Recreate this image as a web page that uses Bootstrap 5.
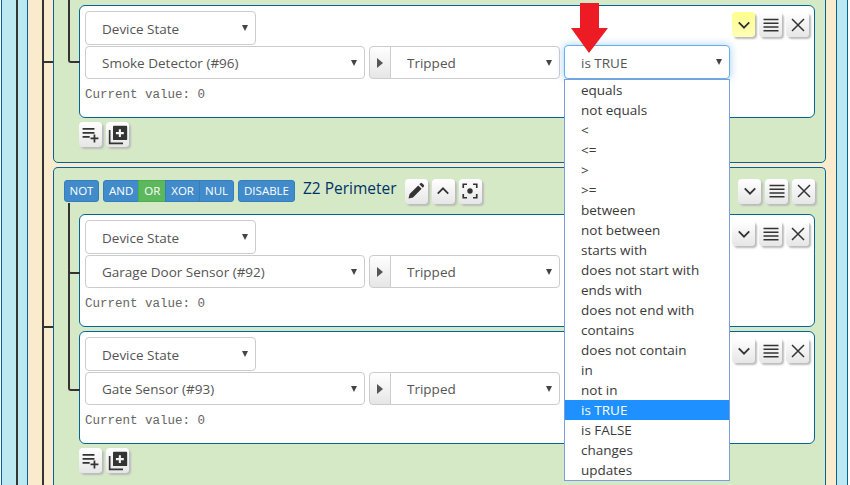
<!DOCTYPE html>
<html lang="en">
<head>
    <meta charset="UTF-8">
    <meta name="viewport" content="width=device-width, initial-scale=1.0">
    <title>Reactor conditions</title>
    <link href="https://cdn.jsdelivr.net/npm/bootstrap@5.3.0/dist/css/bootstrap.min.css" rel="stylesheet">
    <style>
        html, body { height: 485px; overflow: hidden; }
        body { background: #fff; font-family: "Open Sans", sans-serif; font-size: 13.5px; color: #333; }

        .lvl-blue { position: relative; margin: -20px 2px 0 1px; height: 505px; padding: 0 10px 0 25px; background: #bce8f1; border: 1px solid #036597; border-bottom: 0; }
        .lvl-tan { position: relative; height: 100%; padding: 0 10px 0 25px; background: #faebcc; border: 1px solid #036597; border-bottom: 0; }
        .tree-v { position: absolute; top: 0; bottom: 0; left: 14px; width: 2px; background: #333; }

        .grp { position: relative; background: #d6e9c6; border: 1px solid #036597; border-radius: 5px; padding: 0 10px 0 25px; }
        .grp-one { padding-top: 22px; padding-bottom: 15px; margin-bottom: 4px; }
        .grp-two { padding-top: 12px; height: 318px; border-bottom: 0; border-radius: 5px 5px 0 0; }
        .grp::before { content: ""; position: absolute; left: -11px; width: 10px; height: 2px; background: #333; }
        .grp-one::before { bottom: 99px; }
        .grp-two::before { top: 158px; }
        .grp-line { position: absolute; left: 14px; top: 35px; width: 2px; height: 175px; background: #333; }

        .grp-head { height: 22px; margin-left: -15px; margin-bottom: 12px; gap: 4px; }
        .grp-title { font-size: 15.5px; color: #036; margin: -5px 4px 0 4px; white-space: nowrap; }
        .op-btn { padding: 0 5px; height: 22px; font-size: 11.5px; line-height: 20px; border-radius: 3px; background: #428bca; border-color: #357ebd; color: #fff; }
        .op-btn.op-on { background: #5cb85c; border-color: #4cae4c; }
        .op-btn.op-not { padding: 0 4.5px; }

        .cond-card { position: relative; height: 113px; padding: 5px; background: #fff; border: 1px solid #036597; border-radius: 6px; margin-bottom: 4px; }
        .cond-card::before { content: ""; position: absolute; left: -12px; top: -12px; width: 12px; height: 71px; border-left: 2px solid #333; border-bottom: 2px solid #333; border-bottom-left-radius: 3px; }
        .cond-first::before { height: 69px; }
        .cond-top { height: 35px; }
        .cond-row { gap: 4px; }
        .cur-val { font-family: "Liberation Mono", monospace; font-size: 12.5px; line-height: 20px; color: #666; margin-top: 6px; }

        .pick { height: 34px; padding: 0 22px 0 16px; font-size: 13.5px; line-height: 32px; color: #555; border: 1px solid #ccc; border-radius: 4px; font-family: "Open Sans", sans-serif;
            background-image: url("data:image/svg+xml,%3Csvg xmlns='http://www.w3.org/2000/svg' width='8' height='6'%3E%3Cpath d='M1 0h6L4 6z' fill='%23444'/%3E%3C/svg%3E");
            background-position: right 6px center; background-size: 8px 6px; }
        .pick-type { width: 171px; padding-top: 1px; }
        .pick-dev { width: 280px; }
        .pick-test { width: 166px; }
        .cond-row .pick { height: 33px; }
        .pick-wrap { position: relative; }
        .cond-row .pick-open, .cond-row .pick-open:focus { height: 34px; margin-top: -1px; padding-top: 1px; border-color: #66afe9; box-shadow: 0 0 8px rgba(102, 175, 233, .6); }

        .mini-group { width: 191px; flex-wrap: nowrap; }
        .mini-step { width: 22px; padding: 0; justify-content: center; background: linear-gradient(#fff, #e6e6e6); border: 1px solid #ccc; border-radius: 4px 0 0 4px; }
        .mini-group .pick { flex: 1; width: auto; }

        .ico-btn { width: 23px; height: 25px; padding: 0; display: flex; align-items: center; justify-content: center; flex: none; border: 0; border-radius: 4px; background: linear-gradient(#fff, #e6e6e6); box-shadow: 2px 2px 2px #bbb; }
        .ico-btn svg { display: block; }
        .ico-hot { background: linear-gradient(#ffff8c, #ffffb8); }
        .ico-set { gap: 4px; }
        .ico-side { margin-top: 1px; }
        .grp-head .ico-side { margin-top: 0; }

        .test-list { position: absolute; top: 33px; left: 0; width: 166px; min-width: 0; margin: 0; padding: 0; border: 1px solid #7c9fdc; border-radius: 0; z-index: 20; }
        .test-list .dropdown-item { padding: 0 16px; line-height: 20px; font-size: 13.5px; color: #3a3a3a; }
        .test-list .dropdown-item.active { background: #1e90ff; color: #fff; }
        .red-arrow { position: absolute; left: 7px; top: -43px; z-index: 30; pointer-events: none; }
    </style>
</head>
<body>
    <svg width="0" height="0" class="position-absolute">
        <symbol id="i-down" viewBox="0 0 24 24"><path d="M5 8.500l7 7 7-7" fill="none" stroke="#333" stroke-width="2.400"/></symbol>
        <symbol id="i-up" viewBox="0 0 24 24"><path d="M5 15.500l7-7 7 7" fill="none" stroke="#333" stroke-width="2.400"/></symbol>
        <symbol id="i-menu" viewBox="0 0 24 24"><path d="M2 4.500h20M2 9.500h20M2 14.500h20M2 19.500h20" fill="none" stroke="#333" stroke-width="2"/></symbol>
        <symbol id="i-x" viewBox="0 0 24 24"><path d="M3 3l18 18M21 3L3 21" fill="none" stroke="#333" stroke-width="2.2"/></symbol>
        <symbol id="i-pen" viewBox="0 0 24 24"><path d="M2 22l1.500-6L15 4.500l4.500 4.500L8 20.500zM16.500 3l1.500-1.500a1.500 1.500 0 0 1 2 0l2.500 2.500a1.500 1.500 0 0 1 0 2L21 7.500z" fill="#333"/></symbol>
        <symbol id="i-focus" viewBox="0 0 24 24"><path d="M3 8V3h5M16 3h5v5M21 16v5h-5M8 21H3v-5" fill="none" stroke="#333" stroke-width="2.2"/><circle cx="12" cy="12" r="3.600" fill="#333"/></symbol>
        <symbol id="i-addrow" viewBox="0 0 24 24"><path d="M2 5h15M2 10h15M2 15h9M17 12v10M12 17h10" fill="none" stroke="#333" stroke-width="2.200"/></symbol>
        <symbol id="i-addgrp" viewBox="0 0 24 24"><path d="M2 6v16h16" fill="none" stroke="#333" stroke-width="2"/><path fill-rule="evenodd" d="M7 1h15a1 1 0 0 1 1 1v15a1 1 0 0 1-1 1H7a1 1 0 0 1-1-1V2a1 1 0 0 1 1-1zM13 5v3.500H9.500v2.500H13v3.500h2.500V11H19V8.500h-3.500V5z" fill="#333"/></symbol>
    </svg>

    <div class="lvl-blue">
        <div class="tree-v"></div>
        <div class="lvl-tan">
            <div class="tree-v"></div>

            <div class="grp grp-one">
                <div class="cond-card cond-first">
                    <div class="cond-top d-flex justify-content-between align-items-start">
                        <select class="form-select pick pick-type"><option>Device State</option></select>
                        <div class="d-flex ico-set ico-side">
                            <button class="ico-btn ico-hot"><svg width="18" height="18"><use href="#i-down"/></svg></button>
                            <button class="ico-btn"><svg width="18" height="18"><use href="#i-menu"/></svg></button>
                            <button class="ico-btn"><svg width="16" height="16"><use href="#i-x"/></svg></button>
                        </div>
                    </div>
                    <div class="d-flex cond-row">
                        <select class="form-select pick pick-dev"><option>Smoke Detector (#96)</option></select>
                        <div class="input-group mini-group">
                            <span class="input-group-text mini-step"><svg width="6" height="10"><path d="M0 0l6 5-6 5z" fill="#555"/></svg></span>
                            <select class="form-select pick"><option>Tripped</option></select>
                        </div>
                        <div class="pick-wrap">
                            <select class="form-select pick pick-test pick-open"><option>is TRUE</option></select>
                            <svg class="red-arrow" width="37" height="50"><path d="M9 0h19v25h9L18 50 0 25h9z" fill="#ed1c24"/></svg>
                            <ul class="dropdown-menu show test-list">
                                <li><a class="dropdown-item" href="#">equals</a></li>
                                <li><a class="dropdown-item" href="#">not equals</a></li>
                                <li><a class="dropdown-item" href="#">&lt;</a></li>
                                <li><a class="dropdown-item" href="#">&lt;=</a></li>
                                <li><a class="dropdown-item" href="#">&gt;</a></li>
                                <li><a class="dropdown-item" href="#">&gt;=</a></li>
                                <li><a class="dropdown-item" href="#">between</a></li>
                                <li><a class="dropdown-item" href="#">not between</a></li>
                                <li><a class="dropdown-item" href="#">starts with</a></li>
                                <li><a class="dropdown-item" href="#">does not start with</a></li>
                                <li><a class="dropdown-item" href="#">ends with</a></li>
                                <li><a class="dropdown-item" href="#">does not end with</a></li>
                                <li><a class="dropdown-item" href="#">contains</a></li>
                                <li><a class="dropdown-item" href="#">does not contain</a></li>
                                <li><a class="dropdown-item" href="#">in</a></li>
                                <li><a class="dropdown-item" href="#">not in</a></li>
                                <li><a class="dropdown-item active" href="#">is TRUE</a></li>
                                <li><a class="dropdown-item" href="#">is FALSE</a></li>
                                <li><a class="dropdown-item" href="#">changes</a></li>
                                <li><a class="dropdown-item" href="#">updates</a></li>
                            </ul>
                        </div>
                    </div>
                    <div class="cur-val">Current value: 0</div>
                </div>
                <div class="d-flex ico-set">
                    <button class="ico-btn"><svg width="19" height="19"><use href="#i-addrow"/></svg></button>
                    <button class="ico-btn"><svg width="20" height="20"><use href="#i-addgrp"/></svg></button>
                </div>
            </div>

            <div class="grp grp-two">
                <div class="grp-line"></div>
                <div class="grp-head d-flex align-items-center">
                    <button class="btn op-btn op-not">NOT</button>
                    <div class="btn-group">
                        <button class="btn op-btn">AND</button>
                        <button class="btn op-btn op-on">OR</button>
                        <button class="btn op-btn">XOR</button>
                        <button class="btn op-btn">NUL</button>
                    </div>
                    <button class="btn op-btn">DISABLE</button>
                    <span class="grp-title">Z2 Perimeter</span>
                    <button class="ico-btn"><svg width="18" height="18"><use href="#i-pen"/></svg></button>
                    <button class="ico-btn"><svg width="18" height="18"><use href="#i-up"/></svg></button>
                    <button class="ico-btn"><svg width="18" height="18"><use href="#i-focus"/></svg></button>
                    <div class="d-flex ico-set ico-side ms-auto">
                        <button class="ico-btn"><svg width="18" height="18"><use href="#i-down"/></svg></button>
                        <button class="ico-btn"><svg width="18" height="18"><use href="#i-menu"/></svg></button>
                        <button class="ico-btn"><svg width="16" height="16"><use href="#i-x"/></svg></button>
                    </div>
                </div>

                <div class="cond-card">
                    <div class="cond-top d-flex justify-content-between align-items-start">
                        <select class="form-select pick pick-type"><option>Device State</option></select>
                        <div class="d-flex ico-set ico-side">
                            <button class="ico-btn"><svg width="18" height="18"><use href="#i-down"/></svg></button>
                            <button class="ico-btn"><svg width="18" height="18"><use href="#i-menu"/></svg></button>
                            <button class="ico-btn"><svg width="16" height="16"><use href="#i-x"/></svg></button>
                        </div>
                    </div>
                    <div class="d-flex cond-row">
                        <select class="form-select pick pick-dev"><option>Garage Door Sensor (#92)</option></select>
                        <div class="input-group mini-group">
                            <span class="input-group-text mini-step"><svg width="6" height="10"><path d="M0 0l6 5-6 5z" fill="#555"/></svg></span>
                            <select class="form-select pick"><option>Tripped</option></select>
                        </div>
                    </div>
                    <div class="cur-val">Current value: 0</div>
                </div>

                <div class="cond-card">
                    <div class="cond-top d-flex justify-content-between align-items-start">
                        <select class="form-select pick pick-type"><option>Device State</option></select>
                        <div class="d-flex ico-set ico-side">
                            <button class="ico-btn"><svg width="18" height="18"><use href="#i-down"/></svg></button>
                            <button class="ico-btn"><svg width="18" height="18"><use href="#i-menu"/></svg></button>
                            <button class="ico-btn"><svg width="16" height="16"><use href="#i-x"/></svg></button>
                        </div>
                    </div>
                    <div class="d-flex cond-row">
                        <select class="form-select pick pick-dev"><option>Gate Sensor (#93)</option></select>
                        <div class="input-group mini-group">
                            <span class="input-group-text mini-step"><svg width="6" height="10"><path d="M0 0l6 5-6 5z" fill="#555"/></svg></span>
                            <select class="form-select pick"><option>Tripped</option></select>
                        </div>
                    </div>
                    <div class="cur-val">Current value: 0</div>
                </div>
                <div class="d-flex ico-set">
                    <button class="ico-btn"><svg width="19" height="19"><use href="#i-addrow"/></svg></button>
                    <button class="ico-btn"><svg width="20" height="20"><use href="#i-addgrp"/></svg></button>
                </div>
            </div>
        </div>
    </div>

    <script src="https://cdn.jsdelivr.net/npm/bootstrap@5.3.0/dist/js/bootstrap.bundle.min.js"></script>
</body>
</html>
